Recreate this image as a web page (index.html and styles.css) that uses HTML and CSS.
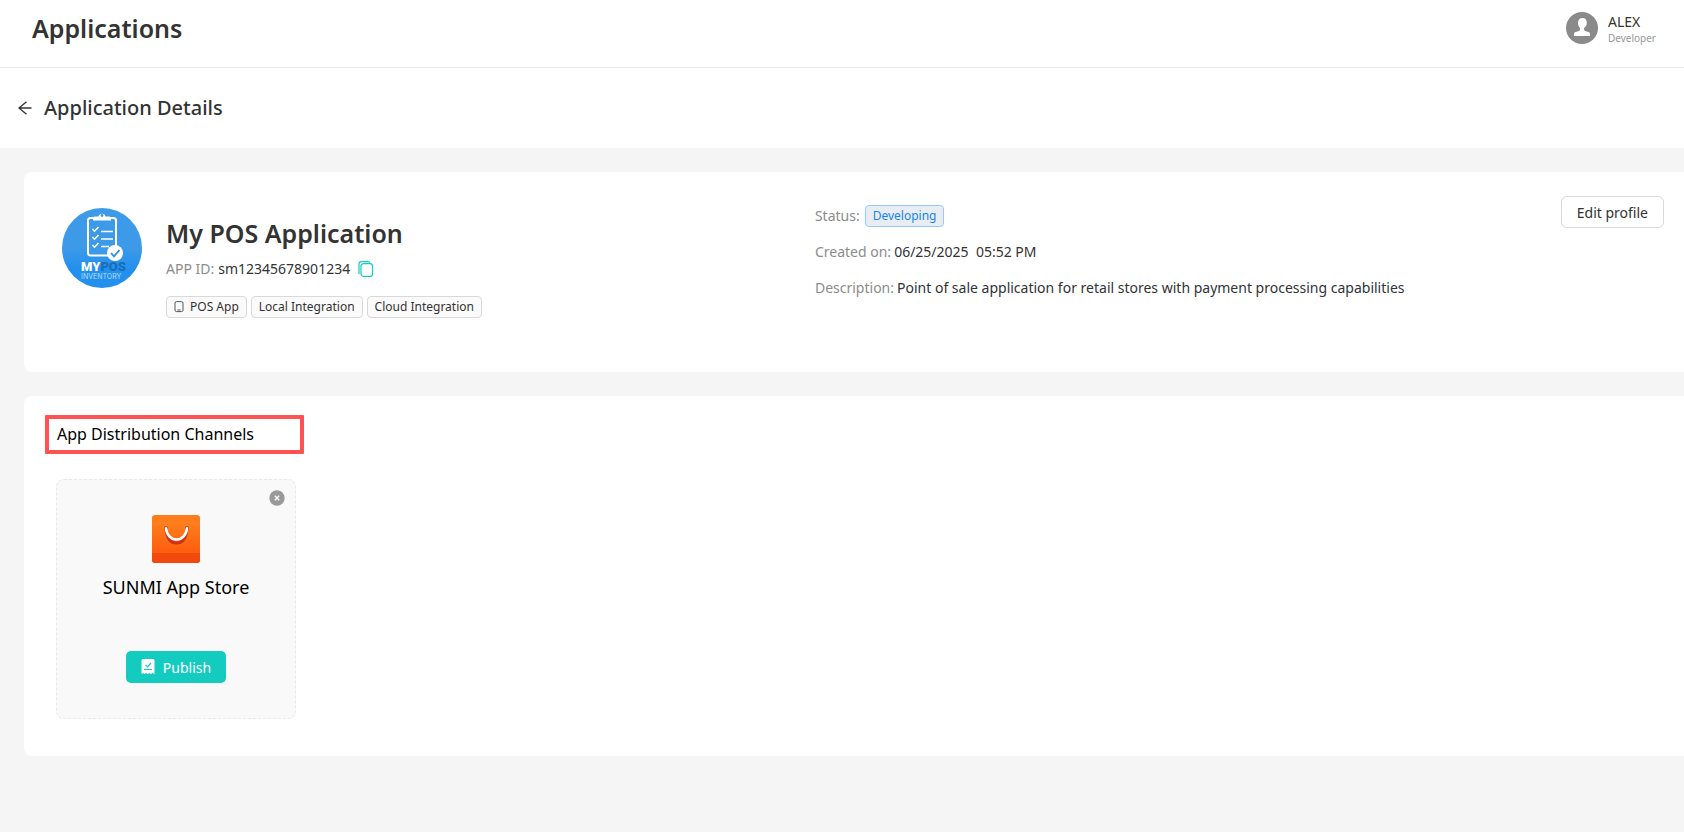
FILE: index.html
```html
<!DOCTYPE html>
<html lang="en">
<head>
  <meta charset="UTF-8">
  <meta name="viewport" content="width=device-width, initial-scale=1.0">
  <title>Applications</title>
  <link rel="stylesheet" href="styles.css">
</head>
<body>
  <header class="topbar">
    <h1>Applications</h1>
    <div class="user">
      <svg class="avatar" viewBox="0 0 32 32" aria-hidden="true">
        <circle cx="16" cy="16" r="16" fill="#8a8a8a"/>
        <path d="M16.500 6C13.800 6 12 8 12 10.800c0 2.600 1 4.200 2 5.300v1.500c0 .7-.4 1-1 1.300l-3.400 1.200c-1 .4-1.600 1-1.600 2V24h16v-1.900c0-1-.6-1.600-1.600-2L19 18.900c-.6-.3-1-.6-1-1.300v-1.500c1.500-1.100 2.800-2.700 2.800-5.300C20.800 8 19.200 6 16.500 6z" fill="#fff"/>
      </svg>
      <div class="user-text">
        <span class="user-name">ALEX</span>
        <span class="user-role">Developer</span>
      </div>
    </div>
  </header>

  <div class="subbar">
    <a href="#" class="back" aria-label="Back">
      <svg viewBox="0 0 14 14" width="14" height="14"><path d="M13.500 7H1M8.500 .8L1 7l7.500 6.200" fill="none" stroke="#333" stroke-width="1.300"/></svg>
    </a>
    <h2>Application Details</h2>
  </div>

  <main>
    <section class="card profile">
      <div class="app">
        <svg class="app-logo" viewBox="0 0 80 80">
          <defs>
            <linearGradient id="sky" x1="0" y1="0" x2="0" y2="1">
              <stop offset=".5" stop-color="#3d9ae8"/>
              <stop offset=".75" stop-color="#2490ee"/>
            </linearGradient>
          </defs>
          <circle cx="40" cy="40" r="40" fill="url(#sky)"/>
          <rect x="26" y="10" width="28" height="37.500" rx="2.500" fill="#3d9ae8" stroke="#fff" stroke-width="2"/>
          <path d="M31 12.500V10q0-1.500 2-1.500h3.500a3.600 3.600 0 0 1 7 0H47q2 0 2 1.500v2.500z" fill="#fff"/>
          <circle cx="40" cy="7.500" r="1.400" fill="#3d9ae8"/>
          <path d="M30.500 21l2 2.300 4-4.300M30.500 29l2 2.300 4-4.300M30.500 37l2 2.300 4-4.300M39 23.500h12M39 31h12M39 38.500h8" fill="none" stroke="#fff" stroke-width="1.400"/>
          <circle cx="53" cy="45" r="8" fill="#fff"/>
          <path d="M49 45l3 3.300 5.500-6.300" fill="none" stroke="#2f8fe0" stroke-width="1.800"/>
          <text x="19" y="63" class="logo-name" fill="#fff">MY<tspan fill="#166fb8">POS</tspan></text>
          <text x="19" y="71" class="logo-sub" fill="#b5dcfa">INVENTORY</text>
        </svg>
        <div class="app-info">
          <h3>My POS Application</h3>
          <div class="app-id">
            <span class="label">APP ID:</span> <span>sm12345678901234</span>
            <button class="copy" type="button" aria-label="Copy APP ID">
              <svg viewBox="0 0 16 16" width="16" height="16" fill="none" stroke="#14cbbf" stroke-width="1.200">
                <rect x="3" y="2.600" width="11.500" height="12.800" rx="2.500"/>
                <path d="M1 13V3Q1 .6 3.400 .6H10q1.500 0 2 1.200"/>
              </svg>
            </button>
          </div>
          <div class="tags">
            <span class="tag">
              <svg viewBox="0 0 10 12" width="10" height="12" fill="none" stroke="#555"><rect x="1" y=".6" width="8" height="10" rx="1.500"/><path d="M3.500 9h3"/></svg>
              POS App
            </span>
            <span class="tag">Local Integration</span>
            <span class="tag">Cloud Integration</span>
          </div>
        </div>
      </div>
      <div class="meta">
        <div class="meta-row"><span class="label">Status:</span><span class="status">Developing</span></div>
        <div class="meta-row"><span class="label">Created on:</span><span class="date">06/25/2025&nbsp; 05:52 PM</span></div>
        <div class="meta-row"><span class="label">Description:</span><span>Point of sale application for retail stores with payment processing capabilities</span></div>
      </div>
      <button class="edit" type="button">Edit profile</button>
    </section>

    <section class="card channels">
      <h4>App Distribution Channels</h4>
      <div class="channel">
        <button class="close" type="button" aria-label="Remove">
          <svg viewBox="0 0 16 16" width="16" height="16"><circle cx="8" cy="8" r="7.700" fill="#999"/><path d="M5.800 5.800l4.400 4.400M10.200 5.800l-4.400 4.400" stroke="#fff" stroke-width="1.500"/></svg>
        </button>
        <svg class="store" viewBox="0 0 48 48">
          <defs>
            <linearGradient id="bag" x1="0" y1="0" x2="0" y2="1">
              <stop offset=".2" stop-color="#ff7d1a"/>
              <stop offset=".75" stop-color="#ff5e10"/>
            </linearGradient>
          </defs>
          <rect width="48" height="48" rx="3" fill="url(#bag)"/>
          <path d="M0 38h48v7q0 3-3 3H3q-3 0-3-3z" fill="#f24a0d"/>
          <path d="M14 14c1 9 5 14 10.500 14S34 23 35 14" fill="none" stroke="#c9331a" stroke-width="3"/>
          <circle cx="14" cy="13" r="2" fill="#c9331a"/>
          <circle cx="35" cy="13" r="2" fill="#c9331a"/>
          <path d="M14 13c.5 7 5 11.500 10.500 11.500S34.500 20 35 13" fill="none" stroke="#fff" stroke-width="2.600" stroke-linecap="round"/>
        </svg>
        <h5>SUNMI App Store</h5>
        <button class="publish" type="button">
          <svg viewBox="0 0 14 16" width="14" height="16">
            <path d="M2 0h10q1.500 0 1.500 1.500V15l-2-1-1.600 1-1.600-1-1.600 1-1.600-1-1.600 1-1.500-1L.5 15V1.500Q.5 0 2 0z" fill="#fff"/>
            <path d="M4.500 5.800l2 2 3.500-3.800M3 10.500h8" fill="none" stroke="#14cbbf" stroke-width="1.200"/>
          </svg>
          Publish
        </button>
      </div>
    </section>
  </main>
</body>
</html>
```
FILE: styles.css
```css
* {
  box-sizing: border-box;
  margin: 0;
  padding: 0;
}
body {
  font-family: 'Noto Sans', sans-serif;
  font-size: 14px;
  line-height: 20px;
  background-color: #f5f5f5;
  color: #333;
}
button {
  font-family: inherit;
  font-size: 14px;
  cursor: pointer;
}
.topbar {
  display: flex;
  justify-content: space-between;
  align-items: flex-start;
  height: 68px;
  padding: 12px 28px 0 32px;
  background-color: white;
  border-bottom: 1px solid #e8e8e8;
}
h1,
h3 {
  font-size: 25px;
  line-height: 32px;
  font-weight: 600;
}
.user {
  display: flex;
  gap: 10px;
}
.avatar {
  width: 32px;
  height: 32px;
}
.user-text {
  display: flex;
  flex-direction: column;
}
.user-role {
  font-size: 10px;
  line-height: 12px;
  color: #999;
}
.subbar {
  display: flex;
  align-items: center;
  gap: 12px;
  height: 80px;
  padding-left: 18px;
  background-color: white;
}
.back {
  display: flex;
}
h2 {
  font-size: 20px;
  line-height: 28px;
  font-weight: 500;
}
main {
  display: flex;
  flex-direction: column;
  gap: 24px;
  padding: 24px 0 24px 24px;
}
.card {
  background-color: white;
  border-radius: 8px 0 0 8px;
}
.profile {
  display: grid;
  grid-template-columns: 47fr 40fr 13fr;
  align-items: start;
  min-height: 200px;
  padding: 24px 20px 24px 38px;
}
.app {
  display: flex;
  gap: 24px;
  padding-top: 12px;
}
.app-logo {
  flex: none;
  width: 80px;
  height: 80px;
}
.logo-name {
  font: 900 13px Roboto, sans-serif;
}
.logo-sub {
  font: 7px Inter, sans-serif;
}
.app-info {
  padding-top: 9px;
}
.app-id {
  display: flex;
  align-items: center;
  gap: 4px;
  margin-top: 10px;
}
.label {
  color: #8c8c8c;
}
.copy {
  display: flex;
  margin-left: 4px;
  border: none;
  background: none;
}
.tags {
  display: flex;
  gap: 4px;
  margin-top: 17px;
}
.tag,
.status {
  display: flex;
  align-items: center;
  gap: 6px;
  height: 22px;
  padding: 0 7px;
  border: 1px solid #d9d9d9;
  border-radius: 4px;
  background-color: #fafafa;
  font-size: 12px;
  white-space: nowrap;
}
.status {
  margin-left: 2px;
  border-color: #91caff;
  background-color: #e9edf3;
  color: #1585ee;
}
.meta {
  display: flex;
  flex-direction: column;
  gap: 14px;
  padding-top: 9px;
}
.meta-row {
  display: flex;
  align-items: center;
  gap: 3px;
  height: 22px;
  white-space: nowrap;
}
.edit {
  justify-self: end;
  height: 32px;
  padding: 0 15px;
  border: 1px solid #d9d9d9;
  border-radius: 6px;
  background-color: white;
  color: #333;
}
.channels {
  min-height: 360px;
  padding: 19px 21px 37px;
}
h4 {
  width: 259px;
  padding: 5px 8px 6px;
  border: 4px solid #ff5252;
  border-radius: 1px;
  font-size: 16px;
  font-weight: 400;
  color: black;
}
.channel {
  position: relative;
  display: flex;
  flex-direction: column;
  align-items: center;
  width: 240px;
  height: 240px;
  margin: 25px 0 0 11px;
  padding-top: 35px;
  border: 1px dashed #e8e8ec;
  border-radius: 8px;
  background-color: #f9f9f9;
}
.close {
  position: absolute;
  top: 10px;
  right: 10px;
  display: flex;
  border: none;
  background: none;
}
.store {
  width: 48px;
  height: 48px;
}
h5 {
  margin-top: 12px;
  font-size: 18px;
  line-height: 24px;
  font-weight: 400;
  color: black;
}
.publish {
  display: flex;
  align-items: center;
  justify-content: center;
  gap: 8px;
  width: 100px;
  height: 32px;
  margin-top: 52px;
  border: none;
  border-radius: 5px;
  background-color: #14cbbf;
  color: white;
}
```
